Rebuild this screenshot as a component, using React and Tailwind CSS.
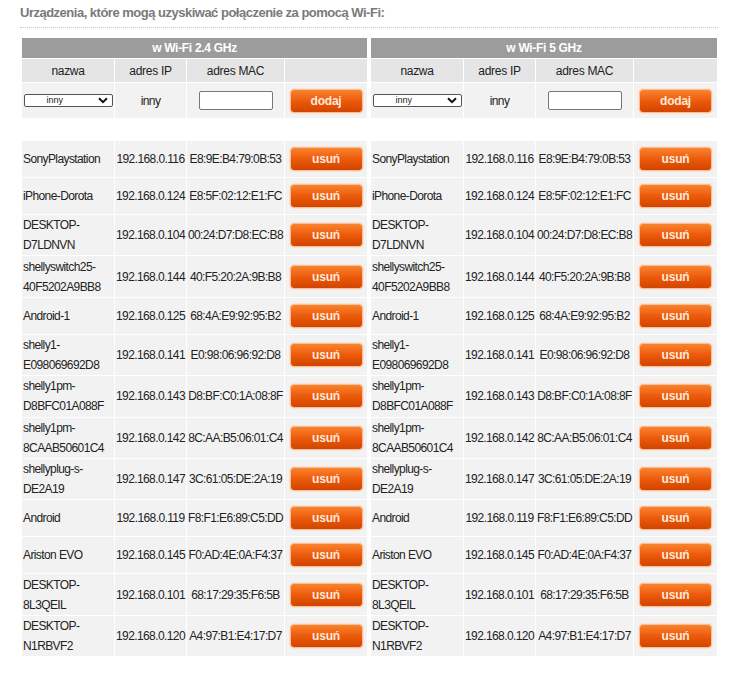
import React from 'react';

const devices = [
    ['SonyPlaystation', '192.168.0.116', 'E8:9E:B4:79:0B:53'],
    ['iPhone-Dorota', '192.168.0.124', 'E8:5F:02:12:E1:FC'],
    ['DESKTOP-\nD7LDNVN', '192.168.0.104', '00:24:D7:D8:EC:B8'],
    ['shellyswitch25-\n40F5202A9BB8', '192.168.0.144', '40:F5:20:2A:9B:B8'],
    ['Android-1', '192.168.0.125', '68:4A:E9:92:95:B2'],
    ['shelly1-\nE098069692D8', '192.168.0.141', 'E0:98:06:96:92:D8'],
    ['shelly1pm-\nD8BFC01A088F', '192.168.0.143', 'D8:BF:C0:1A:08:8F'],
    ['shelly1pm-\n8CAAB50601C4', '192.168.0.142', '8C:AA:B5:06:01:C4'],
    ['shellyplug-s-\nDE2A19', '192.168.0.147', '3C:61:05:DE:2A:19'],
    ['Android', '192.168.0.119', 'F8:F1:E6:89:C5:DD'],
    ['Ariston EVO', '192.168.0.145', 'F0:AD:4E:0A:F4:37'],
    ['DESKTOP-\n8L3QEIL', '192.168.0.101', '68:17:29:35:F6:5B'],
    ['DESKTOP-\nN1RBVF2', '192.168.0.120', 'A4:97:B1:E4:17:D7'],
];

function OrangeButton({ children }) {
    return (
        <button className="w-[73px] h-[24px] rounded-[4px] border border-[#f6bf9c] shadow-[0_0_0_1px_#fbe3d3] bg-gradient-to-b from-[#f9832c] via-[#ec5a0a] to-[#d24400] text-[12px] font-bold text-[#fde9dc] leading-none tracking-[-0.2px]">
            {children}
        </button>
    );
}

function BandTable({ title, last }) {
    const cell = 'border border-white bg-[#f2f2f2] text-[#222] text-[12px] tracking-[-0.6px]';
    return (
        <table className={`border-collapse table-fixed ${last ? 'w-[348px]' : 'w-[347px]'}`}>
            <colgroup>
                <col className="w-[93px]" />
                <col className="w-[72px]" />
                <col className="w-[98px]" />
                <col />
            </colgroup>
            <thead>
                <tr>
                    <th colSpan={4} className="border border-white bg-[#9c9c9c] text-white text-[12px] font-bold h-[21px] p-0 tracking-[-0.3px]">
                        {title}
                    </th>
                </tr>
                <tr>
                    {['nazwa', 'adres IP', 'adres MAC', ''].map((h, i) => (
                        <th key={i} className="border border-white bg-[#e5e5e5] text-[#222] text-[12px] font-normal h-[24px] p-0 tracking-[-0.3px]">
                            {h}
                        </th>
                    ))}
                </tr>
            </thead>
            <tbody>
                <tr className="h-[36px]">
                    <td className={`${cell} text-center px-[1px]`}>
                        <div className="mx-auto w-[89px] h-[13px] border border-[#555] rounded-[2px] bg-white flex items-center justify-between pl-[22px] pr-[4px] text-[9px] leading-none tracking-normal">
                            <span>inny</span>
                            <svg width="10" height="7" viewBox="0 0 10 7"><path d="M1 1.2 L5 5.2 L9 1.2" fill="none" stroke="#111" strokeWidth="2" /></svg>
                        </div>
                    </td>
                    <td className={`${cell} text-center tracking-[-0.3px]`}>inny</td>
                    <td className={`${cell} text-center`}>
                        <div className="mx-auto w-[74px] h-[19px] border border-[#777] rounded-[2px] bg-white" />
                    </td>
                    <td className={`${cell} text-center`}>
                        <OrangeButton>dodaj</OrangeButton>
                    </td>
                </tr>
                <tr className="h-[22px]"><td colSpan={4} className="p-0 bg-white" /></tr>
                {devices.map(([name, ip, mac]) => {
                    const two = name.includes('\n');
                    return (
                        <tr key={name} className={two ? 'h-[41.4px]' : 'h-[37px]'}>
                            <td className={`${cell} pl-[1px] leading-[20px] whitespace-pre-line`}>{name}</td>
                            <td className={`${cell} text-center px-0`}>{ip}</td>
                            <td className={`${cell} text-center px-0`}>{mac}</td>
                            <td className={`${cell} text-center`}>
                                <OrangeButton>usuń</OrangeButton>
                            </td>
                        </tr>
                    );
                })}
            </tbody>
        </table>
    );
}

export default function App() {
    return (
        <div className="bg-white min-h-[674px] w-[747px] pt-[5px] pl-[20px] font-['Liberation_Sans',Arial,sans-serif]">
            <h2 className="text-[13px] font-bold text-[#7a7a7a] leading-[16px] tracking-[-0.5px]">
                Urządzenia, które mogą uzyskiwać połączenie za pomocą Wi-Fi:
            </h2>
            <div className="w-[698px] mt-[6px] border-t border-dotted border-[#c8c8c8]" />
            <div className="flex gap-[2px] pl-[1px] mt-[9px]">
                <BandTable title="w Wi-Fi 2.4 GHz" />
                <BandTable title="w Wi-Fi 5 GHz" last />
            </div>
        </div>
    );
}
